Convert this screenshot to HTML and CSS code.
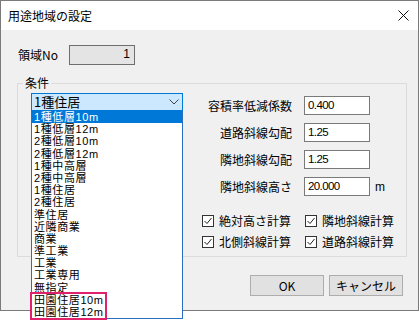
FILE: index.html
```html
<!DOCTYPE html>
<html lang="ja">
<head>
<meta charset="utf-8">
<title>用途地域の設定</title>
<link rel="stylesheet" href="styles.css">
</head>
<body>
<div class="window">
  <div class="titlebar">
    <span class="title">用途地域の設定</span>
    <svg class="close" width="11" height="11" viewBox="0 0 11 11"><path d="M0.5 0.5 L10.5 10.5 M10.5 0.5 L0.5 10.5" stroke="#111" stroke-width="1" fill="none"/></svg>
  </div>
  <div class="body">
    <div class="area-row">
      <span class="area-label">領域No</span>
      <div class="area-box">1</div>
    </div>
    <fieldset class="group">
      <legend class="group-title">条件</legend>
      <div class="group-inner">
        <div class="left-col">
          <div class="combo">
            <div class="combo-box">
              <span>1種住居</span>
              <svg class="chevron" width="10" height="6" viewBox="0 0 10 6"><polyline points="0.5,0.5 5,5 9.5,0.5" stroke="#444" stroke-width="1" fill="none"/></svg>
            </div>
            <div class="droplist">
              <div class="item sel">1種低層10m</div>
              <div class="item">1種低層12m</div>
              <div class="item">2種低層10m</div>
              <div class="item">2種低層12m</div>
              <div class="item">1種中高層</div>
              <div class="item">2種中高層</div>
              <div class="item">1種住居</div>
              <div class="item">2種住居</div>
              <div class="item">準住居</div>
              <div class="item">近隣商業</div>
              <div class="item">商業</div>
              <div class="item">準工業</div>
              <div class="item">工業</div>
              <div class="item">工業専用</div>
              <div class="item">無指定</div>
              <div class="item">田園住居10m</div>
              <div class="item">田園住居12m</div>
              <div class="mark"></div>
            </div>
          </div>
        </div>
        <div class="right-col">
          <div class="field-row"><span class="field-label">容積率低減係数</span><div class="input">0.400</div></div>
          <div class="field-row"><span class="field-label">道路斜線勾配</span><div class="input">1.25</div></div>
          <div class="field-row"><span class="field-label">隣地斜線勾配</span><div class="input">1.25</div></div>
          <div class="field-row"><span class="field-label">隣地斜線高さ</span><div class="input">20.000</div><span class="unit">m</span></div>
          <div class="checks">
            <div class="check"><svg class="cb" width="12" height="12" viewBox="0 0 12 12"><rect x="0.5" y="0.5" width="11" height="11" fill="#fff" stroke="#333"/><polyline points="2.5,6 5,8.5 9.5,3" stroke="#222" stroke-width="1" fill="none"/></svg><span>絶対高さ計算</span></div>
            <div class="check"><svg class="cb" width="12" height="12" viewBox="0 0 12 12"><rect x="0.5" y="0.5" width="11" height="11" fill="#fff" stroke="#333"/><polyline points="2.5,6 5,8.5 9.5,3" stroke="#222" stroke-width="1" fill="none"/></svg><span>隣地斜線計算</span></div>
            <div class="check"><svg class="cb" width="12" height="12" viewBox="0 0 12 12"><rect x="0.5" y="0.5" width="11" height="11" fill="#fff" stroke="#333"/><polyline points="2.5,6 5,8.5 9.5,3" stroke="#222" stroke-width="1" fill="none"/></svg><span>北側斜線計算</span></div>
            <div class="check"><svg class="cb" width="12" height="12" viewBox="0 0 12 12"><rect x="0.5" y="0.5" width="11" height="11" fill="#fff" stroke="#333"/><polyline points="2.5,6 5,8.5 9.5,3" stroke="#222" stroke-width="1" fill="none"/></svg><span>道路斜線計算</span></div>
          </div>
        </div>
      </div>
    </fieldset>
    <div class="buttons">
      <button class="btn">OK</button>
      <button class="btn">キャンセル</button>
    </div>
  </div>
</div>
</body>
</html>
```
FILE: styles.css
```css
html, body {
  margin: 0;
  padding: 0;
  background: #ffffff;
}
body {
  width: 420px;
  height: 323px;
  overflow: hidden;
  font-family: "Noto Sans CJK JP", "Noto Sans", sans-serif;
  font-size: 12px;
  color: #000;
}
.window {
  position: relative;
  box-sizing: border-box;
  width: 419px;
  height: 311px;
  border: 1px solid #7a7a7a;
  background: #f0f0f0;
}
.titlebar {
  height: 29px;
  background: #ffffff;
  display: flex;
  align-items: center;
  padding: 0 9px 0 7px;
}
.title {
  font-size: 12px;
  line-height: 14px;
}
.close {
  margin-left: auto;
  margin-top: -1px;
}
.body {
  padding: 15px 11px 0 16px;
}
.area-row {
  display: flex;
  align-items: center;
  height: 20px;
  padding-left: 1px;
}
.area-label {
  width: 51px;
  line-height: 14px;
}
.area-box {
  box-sizing: border-box;
  width: 66px;
  height: 20px;
  border: 1px solid #6e6e6e;
  background: #e4e4e4;
  text-align: right;
  padding-right: 4px;
  line-height: 17px;
  font-family: "Liberation Sans", sans-serif;
  font-size: 12px;
}
.group {
  margin: 11px 0 0 0;
  padding: 0;
  border: 1px solid #dcdcdc;
  min-width: 0;
}
.group-title {
  margin-left: 5px;
  padding: 0 2px;
  line-height: 14px;
  font-size: 12px;
}
.group-inner {
  height: 166px;
  display: flex;
  padding-left: 13px;
  padding-top: 3px;
  box-sizing: border-box;
}
.left-col {
  width: 152px;
}
.combo {
  position: relative;
  z-index: 2;
}
.combo-box {
  box-sizing: border-box;
  height: 18px;
  border: 1px solid #0078d7;
  background: #cce8ff;
  display: flex;
  align-items: center;
  padding: 0 2px 0 2px;
  font-size: 13px;
}
.combo-box span {
  line-height: 16px;
}
.chevron {
  margin-left: auto;
  margin-right: 1px;
}
.droplist {
  position: absolute;
  top: 100%;
  left: 0;
  width: 152px;
  box-sizing: border-box;
  border: 1px solid #2a6fc0;
  border-top: none;
  background: #ffffff;
}
.item {
  height: 12.2px;
  line-height: 12.2px;
  font-family: "Liberation Sans", "Noto Sans CJK JP", sans-serif;
  font-size: 11px;
  letter-spacing: 0.6px;
  padding-left: 2px;
  white-space: nowrap;
}
.item.sel {
  background: #0078d7;
  color: #ffffff;
}
.mark {
  position: absolute;
  left: -2px;
  top: 181px;
  width: 77px;
  height: 28px;
  box-sizing: border-box;
  border: 2px solid #e0216c;
}
.right-col {
  margin-left: 16px;
  padding-top: 3px;
  display: flex;
  flex-direction: column;
  gap: 8px;
}
.field-row {
  display: flex;
  align-items: center;
  height: 19px;
}
.field-label {
  width: 93px;
  text-align: right;
  margin-right: 12px;
  line-height: 14px;
}
.input {
  box-sizing: border-box;
  width: 66px;
  height: 19px;
  border: 1px solid #7a7a7a;
  background: #ffffff;
  padding-left: 3px;
  line-height: 17px;
  font-family: "Liberation Sans", sans-serif;
  font-size: 11.5px;
  letter-spacing: -0.6px;
}
.unit {
  margin-left: 5px;
  font-family: "Liberation Sans", sans-serif;
  font-size: 12px;
}
.checks {
  margin-top: 9px;
  display: grid;
  grid-template-columns: 103px auto;
  row-gap: 5px;
  padding-left: 3px;
}
.check {
  display: flex;
  align-items: center;
  height: 16px;
}
.cb {
  flex: none;
  margin-right: 5px;
}
.check span {
  line-height: 14px;
}
.buttons {
  display: flex;
  justify-content: flex-end;
  gap: 5px;
  margin-top: 18px;
  padding-right: 4px;
}
.btn {
  box-sizing: border-box;
  width: 74px;
  height: 21px;
  border: 1px solid #adadad;
  background: #e1e1e1;
  font-family: "Noto Sans CJK JP", "Noto Sans", sans-serif;
  font-size: 12px;
  color: #000;
  padding: 0;
  line-height: 17px;
}
```
